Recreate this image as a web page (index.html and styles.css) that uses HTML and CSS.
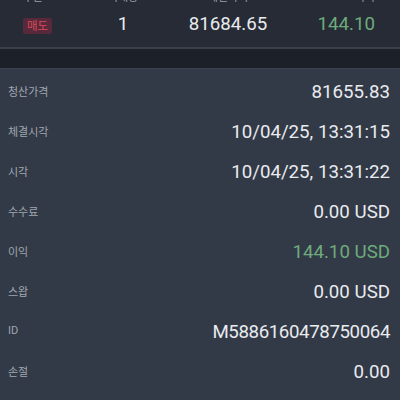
FILE: index.html
```html
<!DOCTYPE html>
<html>
<head>
    <title>주문 상세</title>
    <link rel="stylesheet" href="styles.css">
</head>
<body>
    <div class="trade">
        <div class="trade-head">
            <span class="c-side">구분</span>
            <span class="c-qty">거래량</span>
            <span class="c-price">체결가격</span>
            <span class="c-pl">이익</span>
        </div>
        <div class="trade-row">
            <span class="c-side"><span class="badge-sell">매도</span></span>
            <span class="c-qty">1</span>
            <span class="c-price">81684.65</span>
            <span class="c-pl profit">144.10</span>
        </div>
    </div>

    <div class="gap"></div>

    <div class="details">
        <div class="row">
            <span class="label">청산가격</span>
            <span class="value">81655.83</span>
        </div>
        <div class="row">
            <span class="label">체결시각</span>
            <span class="value">10/04/25, 13:31:15</span>
        </div>
        <div class="row">
            <span class="label">시각</span>
            <span class="value">10/04/25, 13:31:22</span>
        </div>
        <div class="row">
            <span class="label">수수료</span>
            <span class="value">0.00 USD</span>
        </div>
        <div class="row">
            <span class="label">이익</span>
            <span class="value profit">144.10 USD</span>
        </div>
        <div class="row">
            <span class="label">스왑</span>
            <span class="value">0.00 USD</span>
        </div>
        <div class="row">
            <span class="label">ID</span>
            <span class="value id">M5886160478750064</span>
        </div>
        <div class="row">
            <span class="label">손절</span>
            <span class="value">0.00</span>
        </div>
    </div>
</body>
</html>
```

FILE: styles.css
```css
body {
    margin: 0;
    background-color: #333a47;
    font-family: Roboto, "Noto Sans CJK KR", sans-serif;
    color: #e9ebef;
}
.trade {
    background-color: #262b35;
    border-bottom: 2px solid #3a404b;
    height: 47px;
    overflow: hidden;
}
.trade-head,
.trade-row {
    display: grid;
    grid-template-columns: 78px 90px 120px 1fr;
    align-items: center;
}
.trade-head {
    height: 14px;
    margin-top: -12px;
    font-size: 11px;
    color: #9aa0aa;
}
.trade-row {
    height: 44px;
    font-size: 18.7px;
}
.c-side {
    padding-left: 23px;
}
.c-qty {
    text-align: center;
}
.c-price {
    text-align: center;
}
.c-pl {
    text-align: right;
    padding-right: 25px;
}
.badge-sell {
    display: inline-block;
    background-color: #58293a;
    color: #d8485c;
    font-size: 11.5px;
    line-height: 16px;
    padding: 0 4px;
    border-radius: 2px;
}
.profit {
    color: #6dab7d;
}
.gap {
    height: 19px;
    background-color: #1c2029;
    border-bottom: 1px solid #3c4350;
}
.details {
    padding: 0 10px 0 8px;
}
.row {
    display: flex;
    justify-content: space-between;
    align-items: center;
    height: 40px;
}
.row:first-child {
    margin-top: 3px;
}
.label {
    font-size: 11px;
    color: #a0a6b0;
    margin-top: -3px;
}
.value {
    font-size: 18.7px;
}
.id {
    letter-spacing: -0.4px;
}
```
